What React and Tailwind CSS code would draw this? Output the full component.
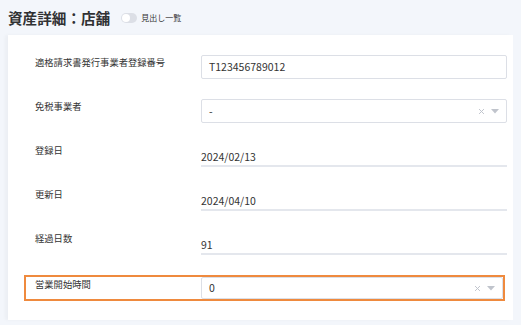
import React, { useState } from 'react';

const font = { fontFamily: '"Noto Sans CJK JP", "Noto Sans", sans-serif' };

const SelectIcons = () => (
  <div className="flex items-center gap-[6px] pr-[7px]">
    <svg width="7" height="7" viewBox="0 0 10 10">
      <path d="M1.5 1.5 L8.5 8.5 M8.5 1.5 L1.5 8.5" stroke="#c0c4cc" strokeWidth="1.4" />
    </svg>
    <svg width="8" height="5" viewBox="0 0 8 5">
      <path d="M0 0 L8 0 L4 4.5 Z" fill="#c0c4cc" />
    </svg>
  </div>
);

const Row = ({ label, children, active, className = '' }) => (
  <div className={`flex h-[26px] ${active ? 'border-2 border-[#ef8a3e] mr-[2px]' : 'border-y-2 border-l-2 border-transparent'} ${className}`}>
    <div className="w-[175px] pl-[9px] text-[9.3px] leading-[13px] text-[#333] pt-[1px]">{label}</div>
    <div className="flex-1">{children}</div>
  </div>
);

const InputBox = ({ value }) => (
  <div className="h-[24px] border border-[#dcdfe6] rounded-[2px] bg-white flex items-center pl-[7px] text-[10.5px] text-[#333]">
    {value}
  </div>
);

const SelectBox = ({ value, h = 'h-[24px]' }) => (
  <div className={`${h} border border-[#dcdfe6] rounded-[2px] bg-white flex items-center justify-between pl-[7px] text-[10.5px] text-[#333]`}>
    <span>{value}</span>
    <SelectIcons />
  </div>
);

const ReadOnly = ({ value }) => (
  <div className="h-[24px] border-b-2 border-[#e4e7ed] pt-[7px] text-[10.5px] leading-[14px] text-[#333]">
    {value}
  </div>
);

export default function App() {
  const [showList, setShowList] = useState(false);

  return (
    <div className="w-[521px] h-[325px] bg-[#f3f6fb] overflow-hidden" style={font}>
      <div className="flex items-center h-[35px] pl-[8px] pt-[1px]">
        <h1 className="text-[14.6px] font-bold text-[#303133]">資産詳細：店舗</h1>
        <button
          onClick={() => setShowList(!showList)}
          className={`ml-[11px] w-[16px] h-[10px] rounded-full ${showList ? 'bg-[#409eff]' : 'bg-[#dcdfe6]'} flex items-center px-[1px]`}
        >
          <span className={`w-[8px] h-[8px] rounded-full bg-white ${showList ? 'ml-auto' : ''}`} />
        </button>
        <span className="ml-[4px] text-[8px] text-[#333]">見出し一覧</span>
      </div>

      <div className="ml-[8px] w-[505px] h-[285px] bg-white shadow-[-3px_0_3px_rgba(0,0,0,0.03)] pt-[18px] pl-[16px] pr-[6px]">
        <div className="flex flex-col gap-[18px]">
          <Row label="適格請求書発行事業者登録番号">
            <InputBox value="T123456789012" />
          </Row>
          <Row label="免税事業者">
            <SelectBox value="-" />
          </Row>
          <Row label="登録日">
            <ReadOnly value="2024/02/13" />
          </Row>
          <Row label="更新日">
            <ReadOnly value="2024/04/10" />
          </Row>
          <Row label="経過日数">
            <ReadOnly value="91" />
          </Row>
          <Row label="営業開始時間" active className="mt-[2px]">
            <SelectBox value="0" h="h-[22px]" />
          </Row>
        </div>
      </div>
    </div>
  );
}
